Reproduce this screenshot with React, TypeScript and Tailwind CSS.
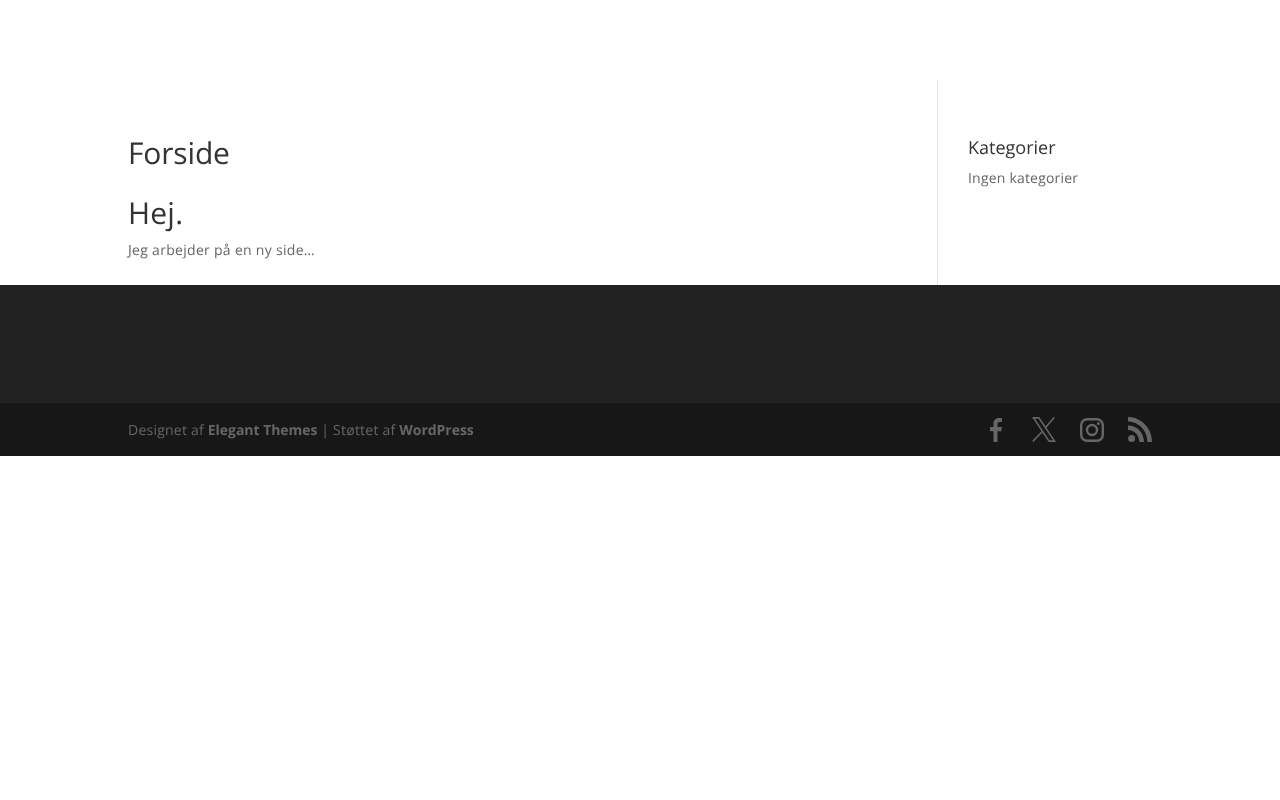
import React from 'react';

const FacebookIcon = () => (
  <svg viewBox="0 0 24 24" className="h-6 w-6 fill-current">
    <path d="M9.5 24V13.2H6V9h3.500V6c0-4 2.300-6 5.600-6 1.500 0 2.600.1 2.900.2v3.900h-2.300c-1.800 0-2.200.9-2.200 2.100V9h4.400l-.6 4.200h-3.800V24z" />
  </svg>
);

const XIcon = () => (
  <svg viewBox="0 0 24 25" className="h-[25px] w-6 fill-none stroke-current">
    <path strokeWidth="1.6" d="M1.500.9h5.400l15.600 23.200h-5.400zM22.200.6 13.400 10.800M10.600 14.200.8 24.400" />
  </svg>
);

const InstagramIcon = () => (
  <svg viewBox="0 0 24 24" className="h-6 w-6 fill-none stroke-current">
    <rect x="1.200" y="1.200" width="21.600" height="21.600" rx="6" strokeWidth="2.400" />
    <circle cx="12" cy="12" r="5" strokeWidth="2.400" />
    <circle cx="18.400" cy="5.600" r="1.500" className="fill-current stroke-none" />
  </svg>
);

const RssIcon = () => (
  <svg viewBox="0 0 24 25" className="h-[25px] w-6 fill-current">
    <path d="M0 0c13 0 24 11 24 25h-4.600C19.400 13.500 10.500 4.600 0 4.600z" />
    <path d="M0 8.500c9 0 16 7.400 16 16.500h-4.600C11.400 18.500 6.300 13.100 0 13.100z" />
    <circle cx="3.600" cy="21.400" r="3.500" />
  </svg>
);

const App: React.FC = () => {
  return (
    <div className="min-h-[800px] bg-white font-['Open_Sans',sans-serif] text-[14px] text-[#666666] [text-rendering:geometricPrecision]">
      <header className="h-20" />

      <main className="mx-auto flex h-[205px] w-[1024px] will-change-transform">
        <div className="w-[809px] pt-[58px]">
          <h1 className="pb-[30px] text-[30px] leading-[30px] tracking-[-0.15px] text-[#333333]">Forside</h1>
          <h2 className="pb-[11px] text-[30px] leading-[30px] tracking-[0.2px] text-[#333333]">Hej.</h2>
          <p className="leading-[24px] tracking-[0.3px]">Jeg arbejder på en ny side…</p>
        </div>
        <aside className="flex-1 border-l border-[#e2e2e2] pl-[30px] pt-[58px]">
          <h4 className="pb-[9px] text-[18px] leading-[20px] text-[#333333]">Kategorier</h4>
          <p className="leading-[24px] tracking-[0.2px]">Ingen kategorier</p>
        </aside>
      </main>

      <footer className="bg-[#222222]">
        <div className="h-[118px]" />
        <div className="bg-[#171717]">
          <div className="mx-auto flex h-[53px] w-[1024px] items-center justify-between will-change-transform">
            <p className="pt-[2px] tracking-[0.23px]">
              Designet af <strong className="font-bold tracking-[-0.04px]">Elegant Themes</strong> | Støttet af{' '}
              <strong className="font-bold tracking-[-0.04px]">WordPress</strong>
            </p>
            <div className="flex items-center gap-6">
              <FacebookIcon />
              <XIcon />
              <InstagramIcon />
              <RssIcon />
            </div>
          </div>
        </div>
      </footer>
    </div>
  );
};

export default App;
